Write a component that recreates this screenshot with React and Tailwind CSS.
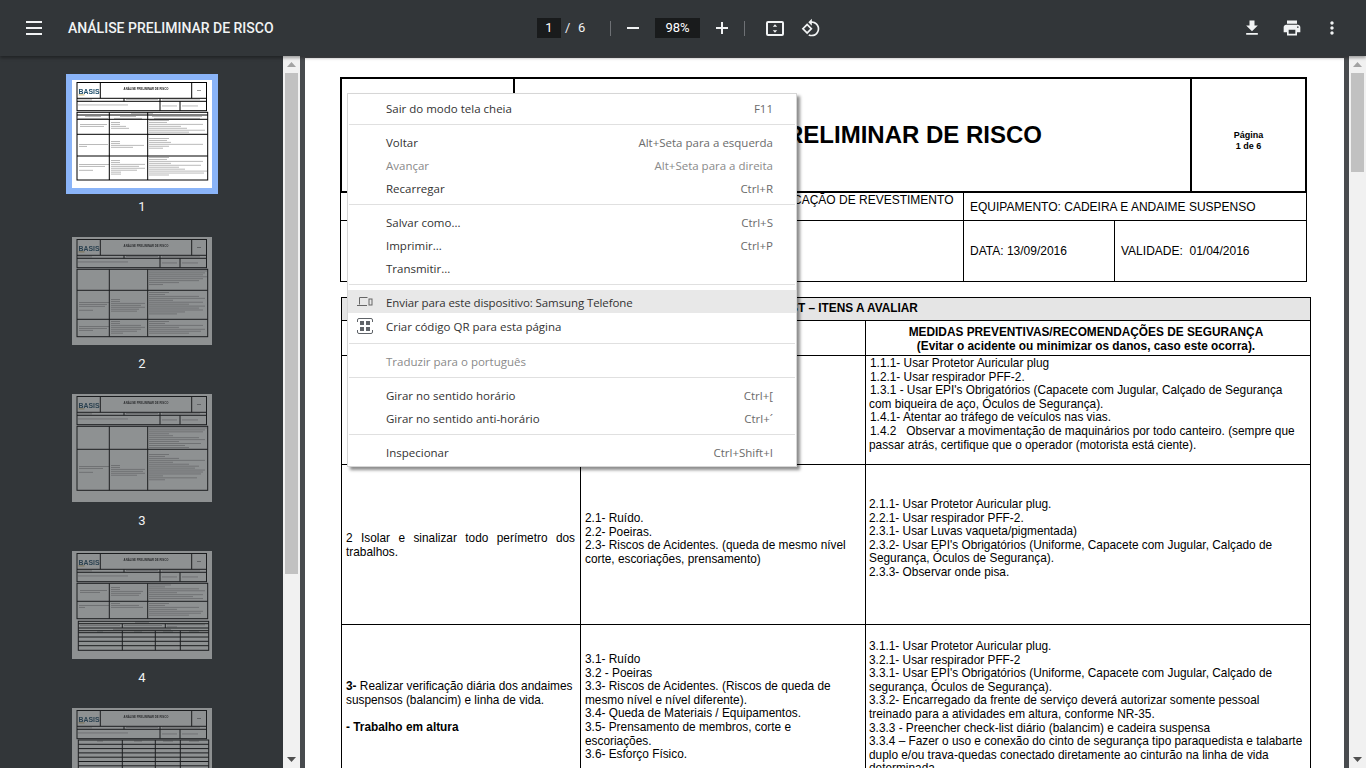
const mi = "M19 9h-4V3H9v6H5l7 7 7-7zM5 18v2h14v-2H5z";
const printP = "M19 8H5c-1.66 0-3 1.34-3 3v6h4v4h12v-4h4v-6c0-1.66-1.34-3-3-3zm-3 11H8v-5h8v5zm3-7c-.55 0-1-.45-1-1s.45-1 1-1 1 .45 1 1-.45 1-1 1zm-1-9H6v4h12V3z";
const kebab = "M12 8c1.1 0 2-.9 2-2s-.9-2-2-2-2 .9-2 2 .9 2 2 2zm0 2c-1.1 0-2 .9-2 2s.9 2 2 2 2-.9 2-2-.9-2-2-2zm0 6c-1.1 0-2 .9-2 2s.9 2 2 2 2-.9 2-2-.9-2-2-2z";
const rot = "M7.34 6.41L.86 12.9l6.49 6.48 6.49-6.48-6.5-6.49zM3.69 12.9l3.66-3.66L11 12.9l-3.66 3.66-3.65-3.66zm15.67-6.26C17.61 4.88 15.3 4 13 4V.76L8.76 5 13 9.24V6c1.79 0 3.58.68 4.95 2.05 2.73 2.73 2.73 7.17 0 9.9C16.58 19.32 14.79 20 13 20c-.97 0-1.94-.21-2.84-.61l-1.49 1.49C10.02 21.62 11.51 22 13 22c2.3 0 4.61-.88 6.36-2.64 3.52-3.51 3.52-9.21 0-12.72z";

function Icon({ d, size = 20 }) {
  return (
    <svg width={size} height={size} viewBox="0 0 24 24" fill="#f1f3f4" className="shrink-0">
      <path d={d} />
    </svg>
  );
}

function Line({ x1, y1, x2, y2, w = 1 }) {
  return <line x1={x1} y1={y1} x2={x2} y2={y2} stroke="#000" strokeWidth={w} />;
}

function Lines({ x, y, items, step = 1.95, center }) {
  return items.map((w, i) => (
    <rect key={i} x={center ? x - w / 2 : x} y={y + i * step} width={w} height="0.9" fill="#000" opacity="0.3" />
  ));
}

function Box({ y1, y2, rows = [], cols = [75.7] }) {
  const all = [37.3, ...cols.filter((c) => c !== 37.3)];
  return (
    <g>
      <rect x="5" y={y1} width="130.7" height={y2 - y1} fill="none" stroke="#000" strokeWidth="1" />
      {rows.map((r) => <Line key={r} x1={5} y1={r} x2={135.7} y2={r} />)}
      {all.map((c) => <Line key={c} x1={c} y1={y1} x2={c} y2={y2} />)}
    </g>
  );
}

function HeaderThumb() {
  return (
    <g>
      <rect x="5" y="2.5" width="129.5" height="28.2" fill="none" stroke="#000" strokeWidth="1" />
      <Line x1={28.3} y1={2.5} x2={28.3} y2={18.3} />
      <Line x1={119.7} y1={2.5} x2={119.7} y2={18.3} />
      <Line x1={5} y1={18.3} x2={134.5} y2={18.3} />
      <Line x1={5} y1={21.3} x2={134.5} y2={21.3} />
      <Line x1={52} y1={18.3} x2={52} y2={21.3} />
      <Line x1={88} y1={18.3} x2={88} y2={30.7} />
      <Line x1={108} y1={21.3} x2={108} y2={30.7} />
      <text x="6.5" y="13.5" fontSize="6.5" fontWeight="700" fill="#1f4e6b" fontFamily="'Liberation Sans',sans-serif" textLength="21" lengthAdjust="spacingAndGlyphs">BASIS</text>
      <rect x="6.5" y="14.4" width="6" height="1" fill="#b89a3a" opacity="0.7" />
      <text x="74" y="10.2" textAnchor="middle" fontSize="2.8" fontWeight="700" fill="#222" fontFamily="'Liberation Sans',sans-serif">ANÁLISE PRELIMINAR DE RISCO</text>
      <rect x="125" y="10" width="4" height="1" fill="#000" opacity="0.4" />
      <Lines x={6} y={19.4} items={[14]} />
      <Lines x={54} y={19} items={[32]} />
      <Lines x={90} y={19.4} items={[38]} />
      <Lines x={6} y={24.5} items={[50]} />
      <Lines x={90} y={25.5} items={[15]} />
      <Lines x={110} y={25.5} items={[16]} />
    </g>
  );
}

function Thumb({ n }) {
  return (
    <svg width="140" height="108" viewBox="0 0 140 108" className="block bg-white">
      <HeaderThumb />
      {n === 1 && (
        <g>
          <Box y1={32.3} y2={100} rows={[35, 39.3, 54.3, 76]} />
          <Lines x={70} y={33.2} items={[22]} center />
          <Lines x={21} y={36} items={[16, 30]} center />
          <Lines x={56} y={36} items={[16, 28]} center />
          <Lines x={105} y={36} items={[50, 46]} center />
          <Lines x={8} y={44} items={[27, 24]} />
          <Lines x={39} y={42} items={[9, 9, 15, 18]} />
          <Lines x={77} y={40} items={[20, 18, 54, 32, 38, 56, 40]} />
          <Lines x={7} y={64} items={[29, 8]} />
          <Lines x={39} y={61} items={[9, 9, 33, 22]} />
          <Lines x={77} y={58} items={[20, 18, 22, 54, 20, 14]} />
          <Lines x={7} y={84} items={[30, 26, 0, 14]} />
          <Lines x={39} y={80} items={[9, 9, 34, 28, 34, 26, 10, 10]} />
          <Lines x={77} y={77} items={[20, 18, 54, 22, 52, 30, 36, 58, 55, 20]} />
        </g>
      )}
      {n === 2 && (
        <g>
          <Box y1={32.3} y2={99.7} rows={[53.3, 82.3]} />
          <Lines x={77} y={33.5} items={[58, 56, 54, 58, 54, 50, 30, 14]} />
          <Lines x={7} y={65} items={[30, 28, 26, 0, 14]} />
          <Lines x={39} y={62} items={[9, 9, 34, 30, 34, 28, 26]} />
          <Lines x={77} y={55} items={[20, 16, 50, 56, 24, 54, 40, 56, 50, 54, 36, 28]} />
          <Lines x={7} y={89} items={[30, 28, 14]} />
          <Lines x={39} y={84} items={[9, 9, 30, 34, 30, 26, 12]} />
          <Lines x={77} y={84} items={[20, 16, 54, 30, 56, 52, 40]} />
        </g>
      )}
      {n === 3 && (
        <g>
          <Box y1={32.3} y2={96.3} rows={[55.3]} />
          <Lines x={77} y={33.5} items={[58, 56, 54, 20, 24, 50, 56, 30, 52, 36, 40]} />
          <Lines x={7} y={72} items={[30, 24, 0, 14]} />
          <Lines x={39} y={71} items={[9, 9, 34, 32, 34, 26]} />
          <Lines x={77} y={60} items={[20, 16, 30, 56, 24, 40, 50, 46, 56, 54, 52, 14, 48, 16]} />
        </g>
      )}
      {n === 4 && (
        <g>
          <Box y1={32.3} y2={67.7} rows={[50.3]} />
          <Lines x={8} y={39} items={[27, 20]} />
          <Lines x={39} y={36} items={[9, 9, 32, 30, 28]} />
          <Lines x={77} y={33.5} items={[22, 16, 50, 56, 28, 54, 44, 54]} />
          <Lines x={7} y={54} items={[30, 6]} />
          <Lines x={39} y={52} items={[9, 28, 32]} />
          <Lines x={77} y={52} items={[20, 16, 50, 28, 54, 52, 40]} />
          <ThumbTable y1={70.3} top={[72.7, 77, 79.7]} rows={[81.7, 86, 90.3, 94.7]} y2={99.3} />
        </g>
      )}
      {n === 5 && (
        <ThumbTable y1={32} top={[]} rows={[36.3, 40.6, 44.9, 49.2, 53.5, 57.8, 62.1, 66.4, 70.7, 75, 79.3, 83.6, 87.9, 92.2, 96.5, 100.8, 105.1]} y2={112} />
      )}
    </svg>
  );
}

function ThumbTable({ y1, top, rows, y2 }) {
  const yc = top.length ? top[2] : y1;
  return (
    <g>
      <rect x="6.3" y={y1} width="130.4" height={y2 - y1} fill="none" stroke="#000" strokeWidth="1" />
      {[...top, ...rows].map((r) => <Line key={r} x1={6.3} y1={r} x2={136.7} y2={r} />)}
      {top.length > 0 && <Line x1={50.3} y1={top[0]} x2={50.3} y2={top[1]} />}
      {top.length > 0 && <Line x1={93.3} y1={top[0]} x2={93.3} y2={top[1]} />}
      {[50.3, 83.3, 108.3].map((c) => <Line key={c} x1={c} y1={yc} x2={c} y2={y2} />)}
      {top.length > 0 && <Lines x={70} y={70.9} items={[14]} center />}
      {top.length > 0 && <Lines x={8} y={74} items={[40]} />}
      {top.length > 0 && <Lines x={52} y={74} items={[38]} />}
      {top.length > 0 && <Lines x={95} y={73.4} items={[38, 10]} />}
      {top.length > 0 && <Lines x={70} y={77.9} items={[58]} center />}
      <Lines x={28} y={yc + 0.7} items={[6]} center />
      <Lines x={66} y={yc + 0.7} items={[8]} center />
      <Lines x={96} y={yc + 0.7} items={[10]} center />
      <Lines x={122} y={yc + 0.7} items={[10]} center />
    </g>
  );
}

function Scrollbar({ h }) {
  return (
    <div className="w-[17px] shrink-0 bg-[#f1f1f1] flex flex-col">
      <div className="h-[17px] flex items-center justify-center">
        <svg width="9" height="5" viewBox="0 0 9 5"><path d="M4.5 0L9 5H0z" fill="#a3a3a3" /></svg>
      </div>
      <div className={`mx-[2px] bg-[#c1c1c1] ${h}`} />
      <div className="mt-auto h-[17px] flex items-center justify-center">
        <svg width="9" height="5" viewBox="0 0 9 5"><path d="M4.5 5L9 0H0z" fill="#505050" /></svg>
      </div>
    </div>
  );
}

function Sidebar() {
  return (
    <div className="w-[283px] shrink-0 bg-[#323639] overflow-hidden pt-[24px] pl-[72px]">
      {[1, 2, 3, 4, 5].map((n) => (
        <div key={n} className="w-[140px] h-[157px]">
          <div className={n === 1 ? "outline-[6px] outline-solid outline-[#8ab4f8]" : "opacity-[0.45]"}>
            <div className="blur-[0.3px]">
              <Thumb n={n} />
            </div>
          </div>
          <div className="pt-[11px] text-center text-[13px] leading-4 text-[#f1f3f4] font-['Roboto',sans-serif]">{n}</div>
        </div>
      ))}
    </div>
  );
}

function Toolbar() {
  return (
    <div className="relative z-10 h-14 bg-[#323639] flex items-center text-[#f1f3f4] font-['Roboto',sans-serif] shadow-[0_2px_3px_rgba(0,0,0,0.35)]">
      <div className="w-[537px] shrink-0 flex items-center pl-[26px]">
        <svg width="16" height="14" viewBox="0 0 16 14" className="shrink-0">
          <path d="M0 0h16v2H0zM0 6h16v2H0zM0 12h16v2H0z" fill="#f1f3f4" />
        </svg>
        <h1 className="ml-[26px] text-[14px] font-medium whitespace-nowrap">ANÁLISE PRELIMINAR DE RISCO</h1>
      </div>
      <div className="flex items-center text-[13px]">
        <div className="w-6 h-5 bg-[#191b1c] text-center leading-5 text-white">1</div>
        <span className="ml-[4px] w-[5px]">/</span>
        <span className="ml-[8px] w-[8px]">6</span>
        <div className="ml-[24px] w-px h-[15px] bg-[#6e7175]" />
        <div className="ml-[16px] w-3 h-[2px] bg-[#f1f3f4]" />
        <div className="ml-[16px] w-[45px] h-5 bg-[#191b1c] text-center leading-5 text-white">98%</div>
        <svg width="12" height="12" viewBox="0 0 12 12" className="ml-[16px]"><path d="M5 0h2v5h5v2H7v5H5V7H0V5h5z" fill="#f1f3f4" /></svg>
        <div className="ml-[16px] w-px h-[15px] bg-[#6e7175]" />
        <svg width="18" height="15" viewBox="0 0 18 15" className="ml-[21px]">
          <rect x="1" y="1" width="16" height="13" rx="1" fill="none" stroke="#f1f3f4" strokeWidth="2" />
          <path d="M9 3.200l2.200 2.600H6.800zM9 11.800l2.200-2.600H6.800z" fill="#f1f3f4" />
        </svg>
        <div className="ml-[17px]"><Icon d={rot} size={20} /></div>
      </div>
      <div className="ml-auto mr-[24px] flex items-center gap-5">
        <Icon d={mi} />
        <Icon d={printP} />
        <Icon d={kebab} />
      </div>
    </div>
  );
}

function Col({ lines, className = "" }) {
  return (
    <div className={`leading-[13.6px] whitespace-pre ${className}`}>
      {lines.map((l, i) => {
        const indent = l.startsWith(">");
        return <div key={i} className={`h-[13.6px] ${indent ? "pl-px" : ""}`}>{indent ? l.slice(1) : l}</div>;
      })}
    </div>
  );
}

function Document() {
  return (
    <div className="flex-1 bg-white overflow-hidden pt-[19px] pl-[35px] font-['Liberation_Sans',sans-serif] text-black text-[12px]">
      <div className="w-[967px] h-[116px] border-2 border-black flex">
        <div className="w-[173px] border-r-2 border-black" />
        <div className="flex-1 border-r-2 border-black flex items-center justify-center text-[24px] font-bold pr-[5px]">ANÁLISE PRELIMINAR DE RISCO</div>
        <div className="w-[113px] flex flex-col items-center justify-center text-[9px] leading-[11px] font-bold pt-[11px]">
          <span>Página</span>
          <span>1 de 6</span>
        </div>
      </div>
      <div className="w-[967px] h-[28px] border-x border-b border-black flex">
        <div className="w-[623px] border-r border-black pl-[426px] leading-[14px] whitespace-nowrap">APLICAÇÃO DE REVESTIMENTO</div>
        <div className="flex-1 flex items-center pl-[6px] pt-[1px]">EQUIPAMENTO: CADEIRA E ANDAIME SUSPENSO</div>
      </div>
      <div className="w-[967px] h-[61px] border-x border-b border-black flex items-center">
        <div className="w-[623px] h-full border-r border-black" />
        <div className="w-[151px] h-full border-r border-black flex items-center pl-[6px]">DATA: 13/09/2016</div>
        <div className="flex-1 pl-[6px] whitespace-pre">VALIDADE:  01/04/2016</div>
      </div>

      <div className="mt-[15px] ml-[1px] w-[970px] border-x border-t border-black text-[11.85px]">
        <div className="h-[23px] bg-[#e5e5e5] border-b border-black flex items-center justify-center font-bold">CHECK LIST – ITENS A AVALIAR</div>
        <div className="h-[35px] border-b border-black grid grid-cols-[239px_285px_1fr] font-bold leading-[14px] text-center">
          <div className="border-r border-black" />
          <div className="border-r border-black flex items-end justify-center pb-[3px]">(Causas e Perigo)</div>
          <div className="pt-[4px] pr-[4px]">
            <div>MEDIDAS PREVENTIVAS/RECOMENDAÇÕES DE SEGURANÇA</div>
            <div>(Evitar o acidente ou minimizar os danos, caso este ocorra).</div>
          </div>
        </div>
        <div className="h-[109px] border-b border-black grid grid-cols-[239px_285px_1fr]">
          <div className="border-r border-black" />
          <div className="border-r border-black" />
          <Col className="pl-[3px] pt-[1px]" lines={[
            ">1.1.1- Usar Protetor Auricular plug",
            ">1.2.1- Usar respirador PFF-2.",
            ">1.3.1 - Usar EPI's Obrigatórios (Capacete com Jugular, Calçado de Segurança",
            "com biqueira de aço, Óculos de Segurança).",
            ">1.4.1- Atentar ao tráfego de veículos nas vias.",
            ">1.4.2   Observar a movimentação de maquinários por todo canteiro. (sempre que",
            "passar atrás, certifique que o operador (motorista está ciente).",
          ]} />
        </div>
        <div className="h-[160px] border-b border-black grid grid-cols-[239px_285px_1fr]">
          <div className="border-r border-black pl-[4px] pr-[5px] pt-[67px] leading-[13.6px] text-justify">2 Isolar e sinalizar todo perímetro dos trabalhos.</div>
          <Col className="border-r border-black pl-[4px] pt-[47px]" lines={[
            "2.1- Ruído.",
            "2.2- Poeiras.",
            "2.3- Riscos de Acidentes. (queda de mesmo nível",
            "corte, escoriações, prensamento)",
          ]} />
          <Col className="pl-[3px] pt-[33px]" lines={[
            "2.1.1- Usar Protetor Auricular plug.",
            "2.2.1- Usar respirador PFF-2.",
            "2.3.1- Usar Luvas vaqueta/pigmentada)",
            "2.3.2- Usar EPI's Obrigatórios (Uniforme, Capacete com Jugular, Calçado de",
            "Segurança, Óculos de Segurança).",
            "2.3.3- Observar onde pisa.",
          ]} />
        </div>
        <div className="h-[160px] grid grid-cols-[239px_285px_1fr]">
          <div className="border-r border-black px-[4px] pt-[55px] leading-[13.6px]">
            <p><b>3-</b> Realizar verificação diária dos andaimes suspensos (balancim) e linha de vida.</p>
            <p className="mt-[13.6px] font-bold">- Trabalho em altura</p>
          </div>
          <Col className="border-r border-black pl-[4px] pt-[28px]" lines={[
            "3.1- Ruído",
            "3.2 - Poeiras",
            "3.3- Riscos de Acidentes. (Riscos de queda de",
            "mesmo nível e nível diferente).",
            "3.4- Queda de Materiais / Equipamentos.",
            "3.5- Prensamento de membros, corte e",
            "escoriações.",
            "3.6- Esforço Físico.",
          ]} />
          <Col className="pl-[3px] pt-[15px]" lines={[
            "3.1.1- Usar Protetor Auricular plug.",
            "3.2.1- Usar respirador PFF-2",
            "3.3.1- Usar EPI's Obrigatórios (Uniforme, Capacete com Jugular, Calçado de",
            "segurança, Óculos de Segurança).",
            "3.3.2- Encarregado da frente de serviço deverá autorizar somente pessoal",
            "treinado para a atividades em altura, conforme NR-35.",
            "3.3.3 - Preencher check-list diário (balancim) e cadeira suspensa",
            "3.3.4 – Fazer o uso e conexão do cinto de segurança tipo paraquedista e talabarte",
            "duplo e/ou trava-quedas conectado diretamente ao cinturão na linha de vida",
            "determinada.",
          ]} />
        </div>
      </div>
    </div>
  );
}

function Row({ label, kbd, disabled, active, icon, h = "h-[23px]" }) {
  return (
    <div className={`${h} flex items-center pr-[23px] relative ${active ? "bg-[#e8e8e8] tracking-[-0.1px]" : ""} ${icon ? "pt-[2px]" : ""}`}>
      {icon && <div className="absolute left-[9px] top-0 bottom-0 flex items-center">{icon}</div>}
      <span className={`ml-[38px] ${disabled ? "text-[#8a8a8a]" : "text-[#333]"}`}>{label}</span>
      {kbd && <span className={`ml-auto ${disabled ? "text-[#8a8a8a]" : "text-[#6b6b6b]"}`}>{kbd}</span>}
    </div>
  );
}

function Sep({ c = "mt-[4px] mb-[6px]" }) {
  return <div className={`${c} mx-[1px] h-px bg-[#e0e0e0]`} />;
}

function Menu() {
  return (
    <div className="absolute left-[347px] top-[93px] z-20 w-[450px] h-[374px] bg-white border border-[#d6d6d6] pt-[3px] text-[11.5px] font-['Open_Sans',sans-serif] shadow-[3px_3px_3px_rgba(0,0,0,0.45)]">
      <Row label="Sair do modo tela cheia" kbd="F11" />
      <Sep />
      <Row label="Voltar" kbd="Alt+Seta para a esquerda" />
      <Row label="Avançar" kbd="Alt+Seta para a direita" disabled />
      <Row label="Recarregar" kbd="Ctrl+R" />
      <Sep />
      <Row label="Salvar como..." kbd="Ctrl+S" />
      <Row label="Imprimir..." kbd="Ctrl+P" />
      <Row label="Transmitir..." />
      <Sep c="mt-[4px] mb-[5px]" />
      <Row label="Enviar para este dispositivo: Samsung Telefone" active icon={
        <svg width="16" height="11" viewBox="0 0 16 11" fill="none" stroke="#666" strokeWidth="1">
          <path d="M2.5 8.500V1.500h8M0 9.500h10" />
          <rect x="11.500" y="2.500" width="4" height="7" fill="#666" stroke="none" />
          <rect x="12.500" y="3.500" width="2" height="5" fill="#e8e8e8" stroke="none" />
        </svg>
      } />
      <Row label="Criar código QR para esta página" h="h-[25px]" icon={
        <svg width="16" height="16" viewBox="0 0 16 16" fill="none">
          <path d="M.5 4V2A1.500 1.500 0 0 1 2 .5h12A1.500 1.500 0 0 1 15.500 2v2M.5 12v2A1.500 1.500 0 0 0 2 15.500h12a1.500 1.500 0 0 0 1.500-1.500v-2" stroke="#5f6368" />
          <path d="M3 3h4v4H3zM9 3h4v4H9zM3 9h4v4H3zM9 9h4v4H9z" fill="#5f6368" />
        </svg>
      } />
      <Sep c="mt-[5px] mb-[6px]" />
      <Row label="Traduzir para o português" disabled />
      <Sep />
      <Row label="Girar no sentido horário" kbd="Ctrl+[" />
      <Row label="Girar no sentido anti-horário" kbd="Ctrl+´" />
      <Sep />
      <Row label="Inspecionar" kbd="Ctrl+Shift+I" />
    </div>
  );
}

export default function App() {
  return (
    <div className="relative w-[1366px] h-[768px] overflow-hidden bg-[#323639] flex flex-col">
      <Toolbar />
      <div className="flex-1 min-h-0 flex">
        <Sidebar />
        <Scrollbar h="h-[501px]" />
        <div className="flex-1 min-w-0 flex bg-[#484b4e] pl-[5px] pr-[5px] pt-[2px]">
          <Document />
        </div>
        <Scrollbar h="h-[99px]" />
      </div>
      <Menu />
    </div>
  );
}
